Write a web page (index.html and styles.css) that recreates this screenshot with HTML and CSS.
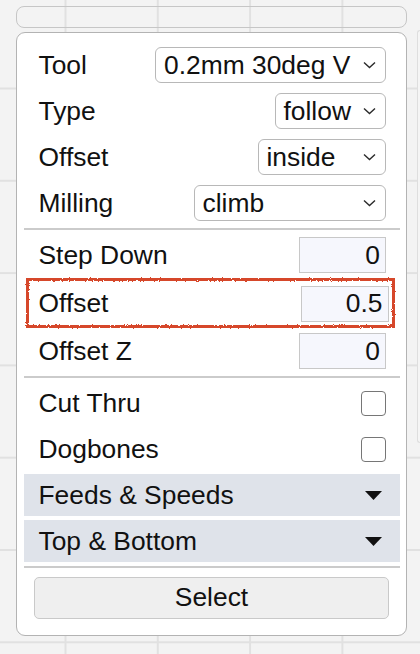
FILE: index.html
```html
<!DOCTYPE html>
<html>
<head>
<meta charset="utf-8">
<link rel="stylesheet" href="styles.css">
</head>
<body>
<svg class="defs" width="0" height="0" aria-hidden="true">
  <filter id="rough" x="-5%" y="-20%" width="110%" height="140%">
    <feTurbulence type="fractalNoise" baseFrequency="0.9" numOctaves="2" seed="3" result="n"/>
    <feDisplacementMap in="SourceGraphic" in2="n" scale="2.8" xChannelSelector="R" yChannelSelector="G"/>
  </filter>
</svg>
<div class="canvas">
  <div class="side-panel"></div>
  <div class="topbar"></div>
  <div class="panel">
    <div class="row">
      <span class="label">Tool</span>
      <div class="select w-tool"><span>0.2mm 30deg V</span><svg class="chev" width="13" height="8" viewBox="0 0 13 8"><path d="M1 1.5 L6.5 6.5 L12 1.5"/></svg></div>
    </div>
    <div class="row">
      <span class="label">Type</span>
      <div class="select w-type"><span>follow</span><svg class="chev" width="13" height="8" viewBox="0 0 13 8"><path d="M1 1.5 L6.5 6.5 L12 1.5"/></svg></div>
    </div>
    <div class="row">
      <span class="label">Offset</span>
      <div class="select w-offset"><span>inside</span><svg class="chev" width="13" height="8" viewBox="0 0 13 8"><path d="M1 1.5 L6.5 6.5 L12 1.5"/></svg></div>
    </div>
    <div class="row">
      <span class="label">Milling</span>
      <div class="select w-milling"><span>climb</span><svg class="chev" width="13" height="8" viewBox="0 0 13 8"><path d="M1 1.5 L6.5 6.5 L12 1.5"/></svg></div>
    </div>
    <div class="sep"></div>
    <div class="row">
      <span class="label">Step Down</span>
      <input class="num" type="text" value="0">
    </div>
    <div class="row hl">
      <span class="label">Offset</span>
      <input class="num" type="text" value="0.5">
    </div>
    <div class="row">
      <span class="label">Offset Z</span>
      <input class="num" type="text" value="0">
    </div>
    <div class="sep"></div>
    <div class="row">
      <span class="label">Cut Thru</span>
      <span class="check"></span>
    </div>
    <div class="row">
      <span class="label">Dogbones</span>
      <span class="check"></span>
    </div>
    <div class="bar bar-first">
      <span>Feeds &amp; Speeds</span>
      <svg class="tri" width="17" height="9" viewBox="0 0 17 9"><path d="M0 0 H17 L8.5 9 Z"/></svg>
    </div>
    <div class="bar bar-second">
      <span>Top &amp; Bottom</span>
      <svg class="tri" width="17" height="9" viewBox="0 0 17 9"><path d="M0 0 H17 L8.5 9 Z"/></svg>
    </div>
    <div class="sep sep-bottom"></div>
    <button class="btn" type="button">Select</button>
  </div>
</div>
</body>
</html>
```

FILE: styles.css
```css
html, body {
  margin: 0;
  padding: 0;
}

body {
  width: 420px;
  height: 654px;
  overflow: hidden;
  background-color: #f3f3f3;
  background-image:
    linear-gradient(to right, #e1e1e1 0, #e1e1e1 1.5px, transparent 1.5px),
    linear-gradient(to bottom, #e1e1e1 0, #e1e1e1 1.5px, transparent 1.5px);
  background-size: 92.3px 92.3px;
  background-position: 64.5px 87.5px;
  font-family: "Liberation Sans", Arial, Helvetica, sans-serif;
  color: #111;
  position: relative;
}

.defs {
  position: absolute;
  width: 0;
  height: 0;
}

.canvas {
  width: 391px;
  padding: 6px 0 0 16px;
  display: flex;
  flex-direction: column;
  gap: 4px;
}

.side-panel {
  position: absolute;
  left: 417px;
  top: 30px;
  width: 3px;
  height: 413px;
  box-sizing: border-box;
  border: 1.5px solid #dedede;
  border-right: none;
  border-radius: 8px 0 0 8px;
  background: #f5f5f5;
}

.topbar {
  height: 22px;
  box-sizing: border-box;
  border: 1.5px solid #c6c6c6;
  border-radius: 8px;
  position: relative;
}

.panel {
  position: relative;
  background: #fff;
  border: 1.5px solid #b3b3b3;
  border-radius: 9px;
  padding: 8.5px 6.5px 16px 6.5px;
  display: flex;
  flex-direction: column;
}

.row {
  height: 46px;
  box-sizing: border-box;
  display: flex;
  align-items: center;
  justify-content: space-between;
  padding: 1px 13.5px 0 15px;
  font-size: 26.4px;
}

.label {
  white-space: nowrap;
}

.select {
  height: 36px;
  box-sizing: border-box;
  border: 1.5px solid #b8b8b8;
  border-radius: 6px;
  background: #fff;
  display: flex;
  align-items: center;
  justify-content: space-between;
  padding: 0 9px 0 8px;
  font-size: 26.4px;
  white-space: nowrap;
}

.w-tool { width: 231px; }
.w-type { width: 111.5px; }
.w-offset { width: 128.5px; }
.w-milling { width: 192.5px; }

.chev path {
  fill: none;
  stroke: #2a2a2a;
  stroke-width: 1.4;
}

.sep {
  height: 2px;
  background: #cbcbcb;
  margin: 2px 0;
  flex: none;
}

.num {
  width: 87.5px;
  height: 36px;
  box-sizing: border-box;
  border: 1px solid #c8c8c8;
  border-radius: 0;
  background: #f6f7fd;
  text-align: right;
  padding: 0 5px 0 4px;
  font-family: "Liberation Sans", Arial, Helvetica, sans-serif;
  font-size: 26.4px;
  color: #111;
  margin: 0;
  outline: none;
}

.hl {
  position: relative;
  height: 50px;
  margin: 0 5px 0 2px;
  padding: 2px 6px 0 13px;
}

.hl::before {
  content: "";
  position: absolute;
  inset: 0;
  border: 3px solid #d6462a;
  filter: url(#rough);
  pointer-events: none;
}

.check {
  width: 25px;
  height: 25px;
  box-sizing: border-box;
  border: 1.5px solid #767676;
  border-radius: 4px;
  background: #fff;
}

.bar {
  height: 42px;
  box-sizing: border-box;
  background: #dfe3ea;
  display: flex;
  align-items: center;
  justify-content: space-between;
  padding: 1px 17.5px 0 15px;
  font-size: 26.4px;
}

.bar-first { margin-top: 2px; }
.bar-second { margin-top: 4px; }

.tri path {
  fill: #111;
}

.sep-bottom {
  margin: 4px 0 9px 0;
}

.btn {
  height: 42px;
  margin: 0 10.5px;
  box-sizing: border-box;
  border: 1.5px solid #c9c9c9;
  border-radius: 5px;
  background: #efefef;
  font-family: "Liberation Sans", Arial, Helvetica, sans-serif;
  font-size: 26.4px;
  color: #111;
  padding: 0;
}
```
